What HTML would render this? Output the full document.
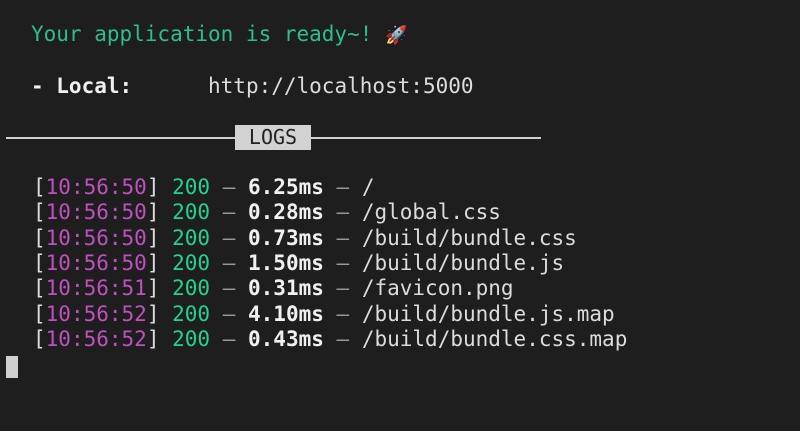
<!DOCTYPE html>
<html><head><meta charset="utf-8"><style>
html,body{margin:0;padding:0;background:#1e1e1e;width:800px;height:431px;overflow:hidden}
body{font-family:"DejaVu Sans Mono","Liberation Mono",monospace;font-size:21px;color:#dcdcdc;position:relative}
.l{position:absolute;left:31px;white-space:pre;line-height:24px;height:24px}
.g{color:#2cbf8c}.n{color:#22d38e}.p{color:#c050c0}.b{font-weight:bold;color:#f0f0f0}.d{color:#999}
.lg{left:33px}
</style></head><body>
<div class="l g" style="top:22px">Your application is ready~! <span style="font-size:18px">🚀</span></div>
<div class="l" style="top:74px"><span class="b">- Local:</span>      http://localhost:5000</div>
<div style="position:absolute;left:6px;top:137px;width:535px;height:2px;background:#d0d0d0"></div>
<div style="position:absolute;left:235px;top:125px;width:76px;height:25px;background:#d2d2d2;color:#222;text-align:center;line-height:25px;font-size:20px">LOGS</div>
<div class="l lg" style="top:175px">[<span class="p">10:56:50</span>] <span class="n">200</span> <span class="d">—</span> <span class="b">6.25ms</span> <span class="d">—</span> /</div>
<div class="l lg" style="top:200px">[<span class="p">10:56:50</span>] <span class="n">200</span> <span class="d">—</span> <span class="b">0.28ms</span> <span class="d">—</span> /global.css</div>
<div class="l lg" style="top:226px">[<span class="p">10:56:50</span>] <span class="n">200</span> <span class="d">—</span> <span class="b">0.73ms</span> <span class="d">—</span> /build/bundle.css</div>
<div class="l lg" style="top:251px">[<span class="p">10:56:50</span>] <span class="n">200</span> <span class="d">—</span> <span class="b">1.50ms</span> <span class="d">—</span> /build/bundle.js</div>
<div class="l lg" style="top:276px">[<span class="p">10:56:51</span>] <span class="n">200</span> <span class="d">—</span> <span class="b">0.31ms</span> <span class="d">—</span> /favicon.png</div>
<div class="l lg" style="top:302px">[<span class="p">10:56:52</span>] <span class="n">200</span> <span class="d">—</span> <span class="b">4.10ms</span> <span class="d">—</span> /build/bundle.js.map</div>
<div class="l lg" style="top:327px">[<span class="p">10:56:52</span>] <span class="n">200</span> <span class="d">—</span> <span class="b">0.43ms</span> <span class="d">—</span> /build/bundle.css.map</div>
<div style="position:absolute;left:6px;top:356px;width:12px;height:22px;background:#d0d0d0"></div>
</body></html>
